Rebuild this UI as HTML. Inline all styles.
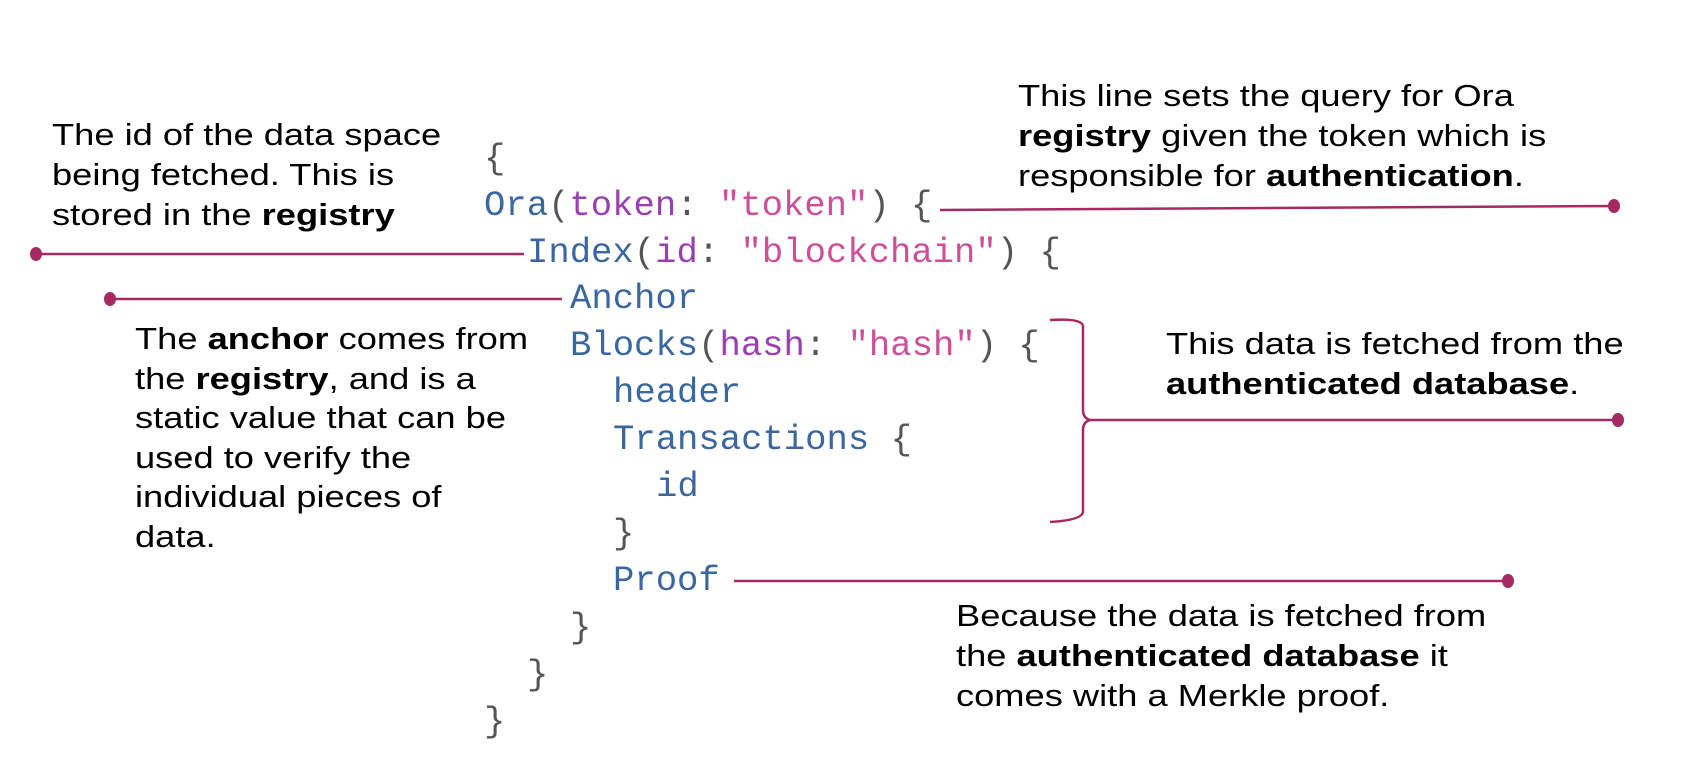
<!DOCTYPE html>
<html><head><meta charset="utf-8"><style>
html,body{margin:0;padding:0;background:#fff;}
body{width:1692px;height:768px;position:relative;overflow:hidden;}
.c{position:absolute;font-family:"Liberation Mono",monospace;font-size:35.6px;line-height:36px;white-space:pre;color:#555;}
.k{color:#3a679f}.a{color:#9a3fb2}.s{color:#cc4f98}
.t{position:absolute;font-family:"Liberation Sans",sans-serif;font-size:31px;color:#000;white-space:pre;line-height:29px;transform:scaleX(1.17);transform-origin:0 0;}
b{font-weight:bold}
svg{position:absolute;left:0;top:0}
</style></head><body>
<svg width="1692" height="768">
<g stroke="#a62a62" stroke-width="2.5" fill="none">
<path d="M940 210 L1614 206"/>
<path d="M36 254 H524"/>
<path d="M109 299 H562"/>
<path d="M1050 320 Q1082 318 1083 326 V410 Q1083 418 1090 420 Q1083 422 1083 430 V512 Q1082 520 1050 522"/>
<path d="M1090 420 H1618"/>
<path d="M734 581 H1508"/>
</g>
<g fill="#a62a62">
<ellipse cx="1614" cy="206" rx="6" ry="7"/>
<ellipse cx="36" cy="254" rx="6" ry="7"/>
<ellipse cx="110" cy="299" rx="6" ry="7"/>
<ellipse cx="1618" cy="420" rx="6" ry="7"/>
<ellipse cx="1508" cy="581" rx="6" ry="7"/>
</g>
</svg>
<div class="c" style="left:484px;top:141px">{</div>
<div class="c" style="left:484px;top:188px"><span class="k">Ora</span>(<span class="a">token</span>: <span class="s">"token"</span>) {</div>
<div class="c" style="left:527px;top:235px"><span class="k">Index</span>(<span class="a">id</span>: <span class="s">"blockchain"</span>) {</div>
<div class="c k" style="left:570px;top:281px">Anchor</div>
<div class="c" style="left:570px;top:328px"><span class="k">Blocks</span>(<span class="a">hash</span>: <span class="s">"hash"</span>) {</div>
<div class="c k" style="left:613px;top:375px">header</div>
<div class="c" style="left:613px;top:422px"><span class="k">Transactions</span> {</div>
<div class="c k" style="left:656px;top:469px">id</div>
<div class="c" style="left:613px;top:516px">}</div>
<div class="c k" style="left:613px;top:563px">Proof</div>
<div class="c" style="left:570px;top:610px">}</div>
<div class="c" style="left:527px;top:657px">}</div>
<div class="c" style="left:484px;top:704px">}</div>

<div class="t" style="left:52px;top:115px;line-height:40px">The id of the data space
being fetched. This is
stored in the <b>registry</b></div>
<div class="t" style="left:135px;top:319px;line-height:39.5px">The <b>anchor</b> comes from
the <b>registry</b>, and is a
static value that can be
used to verify the
individual pieces of
data.</div>
<div class="t" style="left:1018px;top:76px;line-height:40px">This line sets the query for Ora
<b>registry</b> given the token which is
responsible for <b>authentication</b>.</div>
<div class="t" style="left:1166px;top:324px;line-height:40px">This data is fetched from the
<b>authenticated database</b>.</div>
<div class="t" style="left:956px;top:596px;line-height:40px">Because the data is fetched from
the <b>authenticated database</b> it
comes with a Merkle proof.</div>
</body></html>
